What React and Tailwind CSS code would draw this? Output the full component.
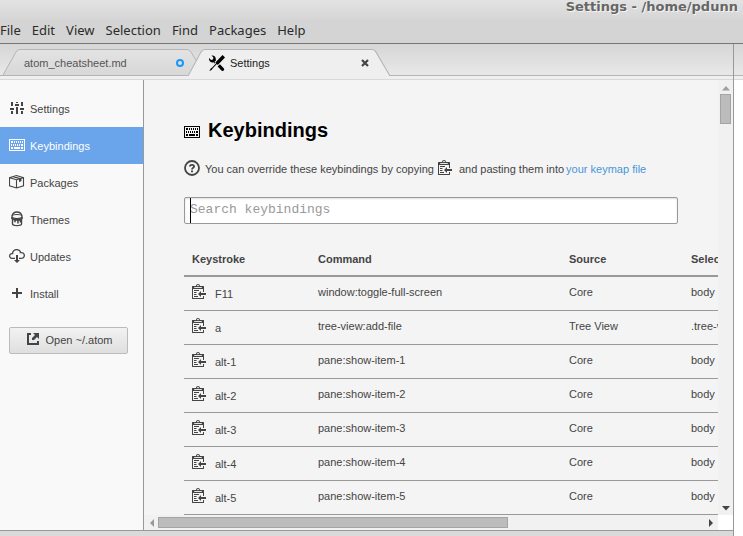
import React from "react";

const CLIPPY =
  "M2 13h4v1H2v-1zm5-6H2v1h5V7zm2 3V8l-3 3 3 3v-2h5v-2H9zM4.5 9H2v1h2.5V9zM2 12h2.5v-1H2v1zm9 1h1v2c-.02.28-.11.52-.3.7-.19.18-.42.28-.7.3H1c-.55 0-1-.45-1-1V4c0-.55.45-1 1-1h3c0-1.11.89-2 2-2 1.11 0 2 .89 2 2h3c.55 0 1 .45 1 1v5h-1V6H1v9h10v-2zM2 5h8c0-.55-.45-1-1-1H8c-.55 0-1-.45-1-1s-.45-1-1-1-1 .45-1 1-.45 1-1 1H3c-.55 0-1 .45-1 1z";

function Icon({ children, className = "" }) {
  return (
    <svg width="16" height="16" viewBox="0 0 16 16" fill="currentColor" aria-hidden="true" className={"block shrink-0 " + className}>
      {children}
    </svg>
  );
}

const ClippyIcon = ({ className }) => (
  <Icon className={className}>
    <path d={CLIPPY} />
    <path d="M.5 5v10.5h11V13M.5 5.5V3.6h11V9" fill="none" stroke="currentColor" />
  </Icon>
);

const KeyboardIcon = ({ className }) => (
  <Icon className={className}>
    <path
      fillRule="evenodd"
      d="M0 2h16v12H0zM1 3v10h14V3zM2 4h2v2H2zM5 4h1v2H5zM7 4h1v2H7zM9 4h1v2H9zM11 4h1v2h-1zM13 4h1v2h-1zM2 7h1v2H2zM4 7h1v2H4zM6 7h1v2H6zM8 7h1v2H8zM10 7h1v2h-1zM12 7h2v2h-2zM2 10h2v2H2zM5 10h6v2H5zM12 10h2v2h-2z"
    />
  </Icon>
);

const SlidersIcon = ({ className }) => (
  <Icon className={className}>
    <path d="M2 2h2v4H2zM1 8h4v2H1zM2 11h2v3H2zM7 2h2v1H7zM6 4h4v2H6zM7 7h2v7H7zM12 2h2v4h-2zM11 8h4v2h-4zM12 11h2v3h-2z" />
  </Icon>
);

const PackageIcon = ({ className }) => (
  <Icon className={className}>
    <path d="M.5 3.7v8.1l7 2.2 7-2.2V3.7l-7-2.2z M.5 3.7l7 2 7-2M7.5 5.7V14M4 2.6l7 2" fill="none" stroke="currentColor" strokeWidth="1.1" />
    <path d="M10 5l2.4-.7v3L10 8z" />
  </Icon>
);

const PaintIcon = ({ className }) => (
  <Icon className={className}>
    <path d="M3 5.2C3.5 2.4 5.4 1 8 1s4.5 1.4 5 4.2" fill="none" stroke="currentColor" strokeWidth="1.3" />
    <ellipse cx="8" cy="5.5" rx="5" ry="2" fill="none" stroke="currentColor" strokeWidth="1.2" />
    <path d="M2 5.5c1 2 3.5 2.5 6 2.5s5-.5 6-2.5v1.6c0 .7-.4.9-.8 1.1v4.8c0 1.3-2.3 2.3-5.2 2.3S2.8 14.3 2.8 13V8.2C2.4 8 2 7.8 2 7.1z" />
    <path d="M4.2 9.3h1v2h1.6v-1.5h1.4v2.8h1.5V9.8h1v1.7h1.2V13c-.8.7-2.2 1-3.9 1s-3-.3-3.8-1z" fill="#f9f9f9" />
  </Icon>
);

const CloudIcon = ({ className }) => (
  <Icon className={className}>
    <path d="M9 12h2l-3 3-3-3h2V7h2v5zm3-8c0-.44-.91-3-4.5-3C5.08 1 3 2.92 3 5 1.02 5 0 6.52 0 8c0 1.53 1 3 3 3h3V9.7H3C1.38 9.7 1.3 8.28 1.3 8c0-.17.05-1.7 1.7-1.7h1.3V5c0-1.39 1.56-2.7 3.2-2.7 2.55 0 3.13 1.55 3.2 1.8v1.2H12c.81 0 2.7.22 2.7 2.2 0 2.09-2.25 2.2-2.7 2.2h-2V11h2c2.08 0 4-1.16 4-3.5C16 5.06 14.08 4 12 4z" />
  </Icon>
);

const PlusIcon = ({ className }) => (
  <Icon className={className}>
    <path d="M7 3h2v4h4v2H9v4H7V9H3V7h4z" />
  </Icon>
);

const ExternalIcon = ({ className }) => (
  <Icon className={className}>
    <path d="M2 2h4v2H4v8h8v-2h2v4H2zM8 2h6v6l-2-2-3 3H7V7l3-3z" />
  </Icon>
);

const ToolsIcon = () => (
  <Icon>
    <path d="M4.48 7.27c.26.26 1.28 1.33 1.28 1.33l.56-.58-.88-.91 1.69-1.8s-.76-.74-.43-.45c.32-1.19.03-2.51-.87-3.44C4.93.5 3.66.2 2.52.51l1.93 2-.51 1.96-1.89.52-1.93-1.99C-.19 4.17.1 5.48 1 6.4c.94.98 2.29 1.26 3.48.87zm6.44 1.94l-2.33 2.3 3.84 3.98c.31.33.73.49 1.14.49.41 0 .82-.16 1.14-.49.63-.65.63-1.7 0-2.35l-3.79-3.93zM16 2.53L13.55 0 6.33 7.46l.88.91-4.31 4.46-.99.53-1.39 2.27.35.37 2.2-1.44.51-1.02L7.9 9.08l.88.91L16 2.53z" />
  </Icon>
);

const QuestionIcon = ({ className }) => (
  <Icon className={className}>
    <circle cx="8" cy="8" r="7" fill="none" stroke="currentColor" strokeWidth="1.8" />
    <path d="M5.9 6.6C5.9 5.3 6.7 4.800 8 4.800s2.100.6 2.100 1.600C10.100 7.700 8 7.700 8 9.500" fill="none" stroke="currentColor" strokeWidth="1.8" />
    <path d="M7 10.400h2v1.800H7z" />
  </Icon>
);

function TabShape({ fill }) {
  return (
    <svg aria-hidden="true" className="absolute inset-0 h-full w-full" viewBox="0 0 202 26" preserveAspectRatio="none">
      <defs>
        <linearGradient id="idle-tab" x1="0" y1="0" x2="0" y2="1">
          <stop offset="0" stopColor="#e3e3e3" />
          <stop offset="1" stopColor="#d8d8d8" />
        </linearGradient>
      </defs>
      <path d="M0 26L13 3Q14.5.5 17 .5H184Q186.5.5 188 3L202 26" fill={fill} stroke="#b4b4b4" />
    </svg>
  );
}

const MENUS = ["File", "Edit", "View", "Selection", "Find", "Packages", "Help"];

const PANELS = [
  ["Settings", SlidersIcon],
  ["Keybindings", KeyboardIcon],
  ["Packages", PackageIcon],
  ["Themes", PaintIcon],
  ["Updates", CloudIcon],
  ["Install", PlusIcon],
];

const BINDINGS = [
  ["F11", "window:toggle-full-screen", "Core", "body"],
  ["a", "tree-view:add-file", "Tree View", ".tree-view"],
  ["alt-1", "pane:show-item-1", "Core", "body"],
  ["alt-2", "pane:show-item-2", "Core", "body"],
  ["alt-3", "pane:show-item-3", "Core", "body"],
  ["alt-4", "pane:show-item-4", "Core", "body"],
  ["alt-5", "pane:show-item-5", "Core", "body"],
];

function TitleBar() {
  return (
    <header className="h-11 shrink-0 overflow-hidden border-b border-[#777] bg-linear-to-b from-[#e3e3e3] to-[#d4d4d4] to-50%">
      <h1 className="ml-[76%] h-4 pl-px whitespace-nowrap font-['DejaVu_Sans',sans-serif] text-[13px] leading-[14px] font-bold text-[#666] [text-shadow:1px_1px_0_#f4f4f4]">
        Settings - /home/pdunn
      </h1>
      <nav className="flex h-7 items-center gap-[11px] font-['Noto_Sans',sans-serif] text-[13px] text-[#2b2b2b]">
        {MENUS.map((m) => (
          <button key={m} type="button">{m}</button>
        ))}
      </nav>
    </header>
  );
}

function Tabs() {
  return (
    <div role="tablist" className="flex h-8 shrink-0 items-end border-b border-[#b4b4b4] bg-linear-to-b from-[#d6d6d6] to-[#e8e8e8] pl-[3px]">
      <div className="relative flex h-[26px] w-[202px] items-center px-[21px] pt-[2px] text-[#555]">
        <TabShape fill="url(#idle-tab)" />
        <button type="button" role="tab" aria-selected="false" className="relative flex-1 text-left">atom_cheatsheet.md</button>
        <span className="relative size-2 rounded-full border-2 border-[#1a98f5]" />
      </div>
      <div className="relative -mb-px -ml-[17px] flex h-[27px] w-[202px] items-center px-[21px] text-[#222]">
        <TabShape fill="#efefef" />
        <button type="button" role="tab" aria-selected="true" className="relative flex flex-1 items-center gap-[5px] text-left">
          <span className="text-black"><ToolsIcon /></span>
          Settings
        </button>
        <button type="button" aria-label="Close tab" className="relative text-[#444]">
          <svg width="8" height="8" viewBox="0 0 8 8" className="block" aria-hidden="true">
            <path d="M1 1l6 6M7 1L1 7" stroke="currentColor" strokeWidth="2.2" />
          </svg>
        </button>
      </div>
    </div>
  );
}

function Sidebar() {
  return (
    <nav className="w-36 shrink-0 border-r border-[#999] bg-[#f9f9f9] pt-[10px]">
      <ul>
        {PANELS.map(([name, Glyph]) => (
          <li key={name}>
            <a
              href={"#" + name.toLowerCase()}
              className={
                "flex h-[37px] items-center gap-[5px] pl-[9px] " +
                (name === "Keybindings" ? "bg-[#6aa4ea] text-white" : "text-[#444]")
              }
            >
              <Glyph className="mb-[2px]" />
              {name}
            </a>
          </li>
        ))}
      </ul>
      <button
        type="button"
        className="mx-[9px] mt-[15px] flex h-[27px] w-[119px] items-center justify-center gap-[5px] rounded-xs border border-[#bbb] bg-linear-to-b from-[#f2f2f2] to-[#dfdfdf] pb-px text-[#444]"
      >
        <ExternalIcon className="mb-[2px]" />
        Open ~/.atom
      </button>
    </nav>
  );
}

function KeybindingTable() {
  return (
    <table className="mt-[18px] w-[814px] table-fixed border-collapse text-left">
      <colgroup>
        <col className="w-[126px]" />
        <col className="w-[251px]" />
        <col className="w-[122px]" />
        <col />
      </colgroup>
      <thead>
        <tr className="h-[34px] border-b-2 border-[#999]">
          {["Keystroke", "Command", "Source", "Selector"].map((h) => (
            <th key={h} scope="col" className="px-2 pt-px font-bold">{h}</th>
          ))}
        </tr>
      </thead>
      <tbody>
        {BINDINGS.map(([key, command, source, selector]) => (
          <tr key={key} className="h-[34px] border-b border-[#999] align-top">
            <td className="px-2 pt-[6px]">
              <div className="flex gap-[7px]">
                <button type="button" aria-label={"Copy " + key} className="self-start"><ClippyIcon /></button>
                <span className="pt-[3px]">{key}</span>
              </div>
            </td>
            <td className="px-2 pt-[7px]">{command}</td>
            <td className="px-2 pt-[7px]">{source}</td>
            <td className="px-2 pt-[7px]">{selector}</td>
          </tr>
        ))}
      </tbody>
    </table>
  );
}

function Arrow({ d, className }) {
  return (
    <svg width="8" height="8" viewBox="0 0 8 8" fill="currentColor" aria-hidden="true" className={className}>
      <path d={d} />
    </svg>
  );
}

function Content() {
  return (
    <div className="grid min-w-0 flex-1 grid-cols-[minmax(0,1fr)_15px] grid-rows-[minmax(0,1fr)_15px] bg-white">
      <main className="overflow-hidden bg-[#f4f4f4] px-10 pt-[35px] text-[#444]">
        <h2 className="flex h-[30px] items-center gap-2 text-[20px] font-bold text-black">
          <KeyboardIcon className="mt-[3px]" />
          Keybindings
        </h2>
        <p className="mt-[14px] flex h-5 items-center whitespace-nowrap">
          <QuestionIcon className="mb-[2px]" />
          <span className="ml-[5px]">You can override these keybindings by copying</span>
          <ClippyIcon className="mb-1 ml-1" />
          <span className="ml-[5px]">and pasting them into</span>
          <a href="#keymap" className="ml-[2px] text-[#4a94d9]">your keymap file</a>
        </p>
        <div className="relative mt-[18px]">
          <input
            type="text"
            aria-label="Search keybindings"
            placeholder="Search keybindings"
            className="block h-[27px] w-full rounded-xs border border-[#999] bg-white px-[5px] pb-[2px] font-['Liberation_Mono',monospace] text-[13px] shadow-[inset_0_1px_2px_#ddd] outline-none placeholder:text-[#999]"
          />
          <span aria-hidden="true" className="absolute inset-y-px left-[6px] w-px bg-black" />
        </div>
        <KeybindingTable />
      </main>
      <div className="flex flex-col items-center bg-[#f1f1f1]">
        <Arrow d="M0 6.5L4 2l4 4.5z" className="mt-1 text-[#a0a0a0]" />
        <div className="mt-[2px] h-[30px] w-[11px] border border-[#a4a4a4] bg-[#bcbcbc]" />
        <Arrow d="M0 2l4 4.5L8 2z" className="mt-auto mb-[3px] text-[#444]" />
      </div>
      <div className="flex items-center bg-[#f1f1f1] text-[#999]">
        <Arrow d="M6 0L2 4l4 4z" className="ml-1" />
        <div className="ml-[2px] h-[11px] w-[61%] border border-[#a4a4a4] bg-[#bcbcbc]" />
        <Arrow d="M2 0l4 4-4 4z" className="mr-[3px] ml-auto text-[#444]" />
      </div>
    </div>
  );
}

export default function App() {
  return (
    <div className="flex h-screen flex-col overflow-hidden bg-white font-['Liberation_Sans',Arial,sans-serif] text-[11px] leading-4">
      <TitleBar />
      <div className="flex min-h-0 flex-1">
        <div className="flex min-w-0 flex-1 flex-col">
          <Tabs />
          <div className="h-1 shrink-0 border-b border-[#d9d9d9] bg-[#efefef]" />
          <div className="flex min-h-0 flex-1">
            <Sidebar />
            <Content />
          </div>
          <footer className="h-[6px] shrink-0 border-t border-[#999] bg-[#dadada]" />
        </div>
        <aside className="w-[10px] shrink-0 border-l border-[#999] bg-white">
          <div className="h-8 border-b border-[#b4b4b4] bg-linear-to-b from-[#d6d6d6] to-[#e8e8e8]" />
          <div className="h-1 border-b border-[#d9d9d9] bg-[#efefef]" />
        </aside>
      </div>
    </div>
  );
}
